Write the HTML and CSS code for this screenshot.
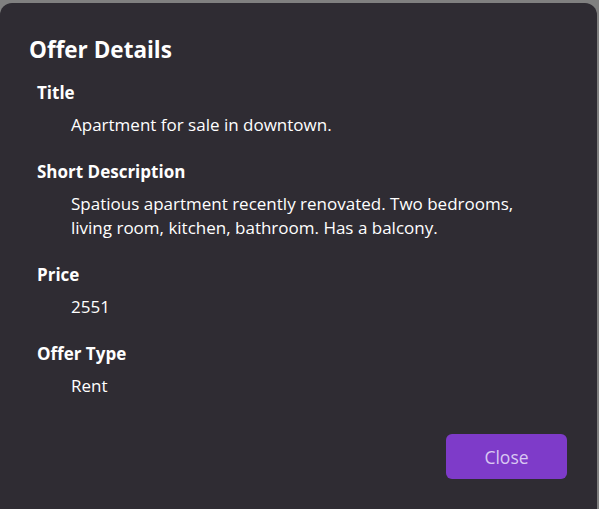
FILE: index.html
```html
<!DOCTYPE html>
<html lang="en">
<head>
<meta charset="utf-8">
<title>Offer Details</title>
<link rel="stylesheet" href="styles.css">
</head>
<body>
<div class="dialog">
  <h2 class="heading">Offer Details</h2>
  <dl class="details">
    <dt class="label">Title</dt>
    <dd class="value">Apartment for sale in downtown.</dd>
    <dt class="label">Short Description</dt>
    <dd class="value">Spatious apartment recently renovated. Two bedrooms, living room, kitchen, bathroom. Has a balcony.</dd>
    <dt class="label">Price</dt>
    <dd class="value">2551</dd>
    <dt class="label">Offer Type</dt>
    <dd class="value">Rent</dd>
  </dl>
  <div class="actions">
    <button class="close-btn" type="button">Close</button>
  </div>
</div>
</body>
</html>
```
FILE: styles.css
```css
html, body {
  margin: 0;
  padding: 0;
  height: 100%;
}
body {
  background: #808080;
  font-family: "Open Sans", "Noto Sans", sans-serif;
  color: #ffffff;
  overflow: hidden;
}
.dialog {
  box-sizing: border-box;
  margin: 3px 2px 0 0;
  height: 520px;
  background: #2f2c33;
  border-radius: 12px;
  padding: 33px 30px 0 29px;
  display: flex;
  flex-direction: column;
}
.heading {
  margin: 0;
  font-size: 22.5px;
  line-height: 28px;
  font-weight: 700;
}
.details {
  margin: 17px 0 0 0;
  display: flex;
  flex-direction: column;
}
.label {
  margin: 0 0 0 8px;
  font-size: 17px;
  line-height: 24px;
  font-weight: 700;
}
.value {
  margin: 8px 0 23px 42px;
  font-size: 17px;
  line-height: 24px;
  max-width: 450px;
}
.value:last-child {
  margin-bottom: 0;
}
.actions {
  display: flex;
  justify-content: flex-end;
  margin-top: 36px;
}
.close-btn {
  width: 121px;
  height: 45px;
  border: none;
  border-radius: 6px;
  background: #7e3bc9;
  color: #d9c8f2;
  font-family: inherit;
  font-size: 17.5px;
  cursor: pointer;
}
```
